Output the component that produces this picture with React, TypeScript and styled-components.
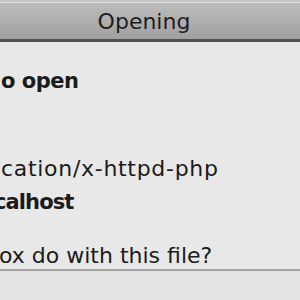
import React from 'react';
import styled, { createGlobalStyle } from 'styled-components';

const GlobalStyle = createGlobalStyle`
  html, body {
    margin: 0;
    padding: 0;
    background: #e8e8e8;
    overflow: hidden;
  }
`;

const Window = styled.div`
  width: 300px;
  height: 300px;
  display: flex;
  flex-direction: column;
  font-family: 'DejaVu Sans', 'Liberation Sans', sans-serif;
  color: #1b1b1b;
  background: #e8e8e8;
  overflow: hidden;
`;

const TitleBar = styled.div`
  height: 35px;
  border-top: 2px solid #c6c6c6;
  border-bottom: 3px solid #505050;
  box-shadow: inset 0 1px 0 #dcdcdc;
  background: linear-gradient(#bdbdbd, #a0a0a0);
  display: flex;
  align-items: center;
  justify-content: center;
  padding-right: 12px;
  padding-top: 2px;
  box-sizing: content-box;
  font-size: 22px;
  color: #1e1e1e;
`;

const Content = styled.div`
  padding-top: 26px;
  display: flex;
  flex-direction: column;
  flex: 0 0 auto;
`;

const Line = styled.div<{
  $bold?: boolean;
  $gap?: number;
  $indent?: number;
  $spacing?: number;
}>`
  font-size: ${p => (p.$bold ? 21 : 22)}px;
  line-height: 26px;
  height: 26px;
  white-space: nowrap;
  font-weight: ${p => (p.$bold ? 700 : 400)};
  letter-spacing: ${p => p.$spacing ?? (p.$bold ? -0.5 : 0)}px;
  margin-top: ${p => p.$gap ?? 0}px;
  text-indent: ${p => p.$indent ?? 0}px;
`;

const Footer = styled.div`
  border-top: 2px solid #a4a4a4;
  background: #e4e4e4;
  flex: 1;
`;

export default function App() {
  return (
    <>
      <GlobalStyle />
      <Window>
        <TitleBar>Opening</TitleBar>
        <Content>
          <Line $bold $indent={1}>o open</Line>
          <Line $gap={62} $indent={1} $spacing={0.7}>
            cation/x-httpd-php
          </Line>
          <Line $bold $gap={7} $indent={-6} $spacing={-0.9}>
            calhost
          </Line>
          <Line $gap={28} $indent={-1}>ox do with this file?</Line>
        </Content>
        <Footer />
      </Window>
    </>
  );
}
